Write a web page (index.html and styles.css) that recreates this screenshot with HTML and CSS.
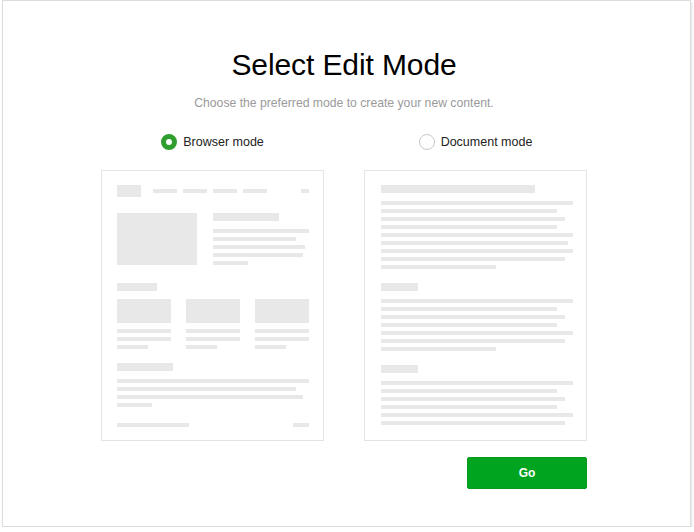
FILE: index.html
```html
<!DOCTYPE html>
<html lang="en">
<head>
<meta charset="utf-8">
<title>Select Edit Mode</title>
<link rel="stylesheet" href="styles.css">
</head>
<body>
<div class="dialog">
  <h1 class="title">Select Edit Mode</h1>
  <p class="subtitle">Choose the preferred mode to create your new content.</p>
  <div class="modes">
    <div class="mode">
      <label class="option">
        <span class="radio checked"></span>
        <span class="option-text">Browser mode</span>
      </label>
      <div class="card web">
        <div class="web-head">
          <div class="b logo"></div>
          <div class="nav">
            <div class="b ln w24"></div>
            <div class="b ln w24"></div>
            <div class="b ln w24"></div>
            <div class="b ln w24"></div>
          </div>
          <div class="b ln w8 push"></div>
        </div>
        <div class="hero">
          <div class="b hero-img"></div>
          <div class="hero-text">
            <div class="b hd w66"></div>
            <div class="lines">
              <div class="b ln w96"></div>
              <div class="b ln w83"></div>
              <div class="b ln w92"></div>
              <div class="b ln w90"></div>
              <div class="b ln w35"></div>
            </div>
          </div>
        </div>
        <div class="b hd w40 sec-a"></div>
        <div class="cols">
          <div class="col">
            <div class="b col-img"></div>
            <div class="lines col-lines">
              <div class="b ln w54"></div>
              <div class="b ln w54"></div>
              <div class="b ln w31"></div>
            </div>
          </div>
          <div class="col">
            <div class="b col-img"></div>
            <div class="lines col-lines">
              <div class="b ln w54"></div>
              <div class="b ln w54"></div>
              <div class="b ln w31"></div>
            </div>
          </div>
          <div class="col">
            <div class="b col-img"></div>
            <div class="lines col-lines">
              <div class="b ln w54"></div>
              <div class="b ln w54"></div>
              <div class="b ln w31"></div>
            </div>
          </div>
        </div>
        <div class="b hd w56 sec-b"></div>
        <div class="lines">
          <div class="b ln w192"></div>
          <div class="b ln w179"></div>
          <div class="b ln w186"></div>
          <div class="b ln w35"></div>
        </div>
        <div class="foot">
          <div class="b ln w72"></div>
          <div class="b ln w16"></div>
        </div>
      </div>
    </div>
    <div class="mode">
      <label class="option">
        <span class="radio"></span>
        <span class="option-text">Document mode</span>
      </label>
      <div class="card doc">
        <div class="b hd w154"></div>
        <div class="lines">
          <div class="b ln w192"></div>
          <div class="b ln w176"></div>
          <div class="b ln w184"></div>
          <div class="b ln w176"></div>
          <div class="b ln w192"></div>
          <div class="b ln w187"></div>
          <div class="b ln w192"></div>
          <div class="b ln w184"></div>
          <div class="b ln w115"></div>
        </div>
        <div class="b hd w37 doc-sec"></div>
        <div class="lines">
          <div class="b ln w192"></div>
          <div class="b ln w176"></div>
          <div class="b ln w184"></div>
          <div class="b ln w176"></div>
          <div class="b ln w192"></div>
          <div class="b ln w184"></div>
          <div class="b ln w115"></div>
        </div>
        <div class="b hd w37 doc-sec"></div>
        <div class="lines">
          <div class="b ln w192"></div>
          <div class="b ln w176"></div>
          <div class="b ln w184"></div>
          <div class="b ln w176"></div>
          <div class="b ln w192"></div>
          <div class="b ln w184"></div>
        </div>
      </div>
    </div>
  </div>
  <div class="actions">
    <button class="go" type="button">Go</button>
  </div>
</div>
</body>
</html>
```

FILE: styles.css
```css
* { box-sizing: border-box; }

html, body {
  margin: 0;
  padding: 0;
  background: #ffffff;
}

body {
  font-family: "Liberation Sans", Arial, sans-serif;
  color: #222;
}

.dialog {
  margin-left: 2px;
  width: 689px;
  height: 527px;
  border: 1px solid #dcdcdc;
  box-shadow: 1px 2px 2px rgba(0, 0, 0, 0.12);
  padding: 46px 5px 0 0;
  display: flex;
  flex-direction: column;
  align-items: center;
  background: #fff;
}

.title {
  margin: 0;
  font-size: 30px;
  line-height: 36px;
  font-weight: normal;
  color: #000;
  letter-spacing: -0.1px;
}

.subtitle {
  margin: 12px 0 0;
  font-size: 12.2px;
  line-height: 16px;
  color: #9a9a9a;
}

.modes {
  margin-top: 22px;
  display: flex;
  gap: 40px;
}

.mode {
  width: 223px;
  display: flex;
  flex-direction: column;
  align-items: center;
}

.option {
  display: flex;
  align-items: center;
  gap: 6px;
  height: 17px;
  font-size: 12.5px;
  line-height: 16px;
  color: #222;
  margin-bottom: 20px;
}

.option-text { padding-top: 1px; }

.radio {
  width: 16px;
  height: 16px;
  border-radius: 50%;
  border: 1px solid #c9c9c9;
  background: #fff;
  flex: none;
}

.radio.checked {
  border: 5px solid #2f9e2f;
}

.card {
  width: 223px;
  height: 271px;
  border: 1px solid #e4e4e4;
  display: flex;
  flex-direction: column;
  align-items: flex-start;
  background: #fff;
}

.web { padding: 14px 14px 0 15px; }
.doc { padding: 14px 13px 0 16px; }

.b { background: #e8e8e8; flex: none; }
.ln { height: 4px; }
.hd { height: 8px; }

.w8 { width: 8px; }
.w16 { width: 16px; }
.w24 { width: 24px; }
.w31 { width: 31px; }
.w35 { width: 35px; }
.w37 { width: 37px; }
.w40 { width: 40px; }
.w54 { width: 54px; }
.w56 { width: 56px; }
.w66 { width: 66px; }
.w72 { width: 72px; }
.w83 { width: 83px; }
.w90 { width: 90px; }
.w92 { width: 92px; }
.w96 { width: 96px; }
.w115 { width: 115px; }
.w154 { width: 154px; }
.w176 { width: 176px; }
.w179 { width: 179px; }
.w184 { width: 184px; }
.w186 { width: 186px; }
.w187 { width: 187px; }
.w192 { width: 192px; }

.lines {
  display: flex;
  flex-direction: column;
  gap: 4px;
  margin-top: 8px;
}

.web-head {
  width: 192px;
  height: 12px;
  display: flex;
  align-items: center;
}

.logo { width: 24px; height: 12px; }

.nav {
  display: flex;
  gap: 6px;
  margin-left: 12px;
}

.push { margin-left: auto; }

.hero {
  margin-top: 16px;
  display: flex;
  gap: 16px;
}

.hero-img { width: 80px; height: 52px; }

.hero-text { width: 96px; }

.sec-a { margin-top: 18px; }

.cols {
  margin-top: 8px;
  display: flex;
  gap: 15px;
}

.col { width: 54px; }

.col-img { width: 54px; height: 24px; }

.col-lines { margin-top: 6px; }

.sec-b { margin-top: 14px; }

.foot {
  margin-top: 16px;
  width: 192px;
  display: flex;
  justify-content: space-between;
}

.doc-sec { margin-top: 14px; }

.actions {
  width: 486px;
  margin-top: 16px;
  display: flex;
  justify-content: flex-end;
}

.go {
  width: 120px;
  height: 32px;
  border: 1px solid #07991f;
  border-radius: 2px;
  background: #00a41f;
  color: #fff;
  font-family: "Liberation Sans", Arial, sans-serif;
  font-size: 12px;
  font-weight: bold;
  padding: 0;
  cursor: pointer;
}
```
